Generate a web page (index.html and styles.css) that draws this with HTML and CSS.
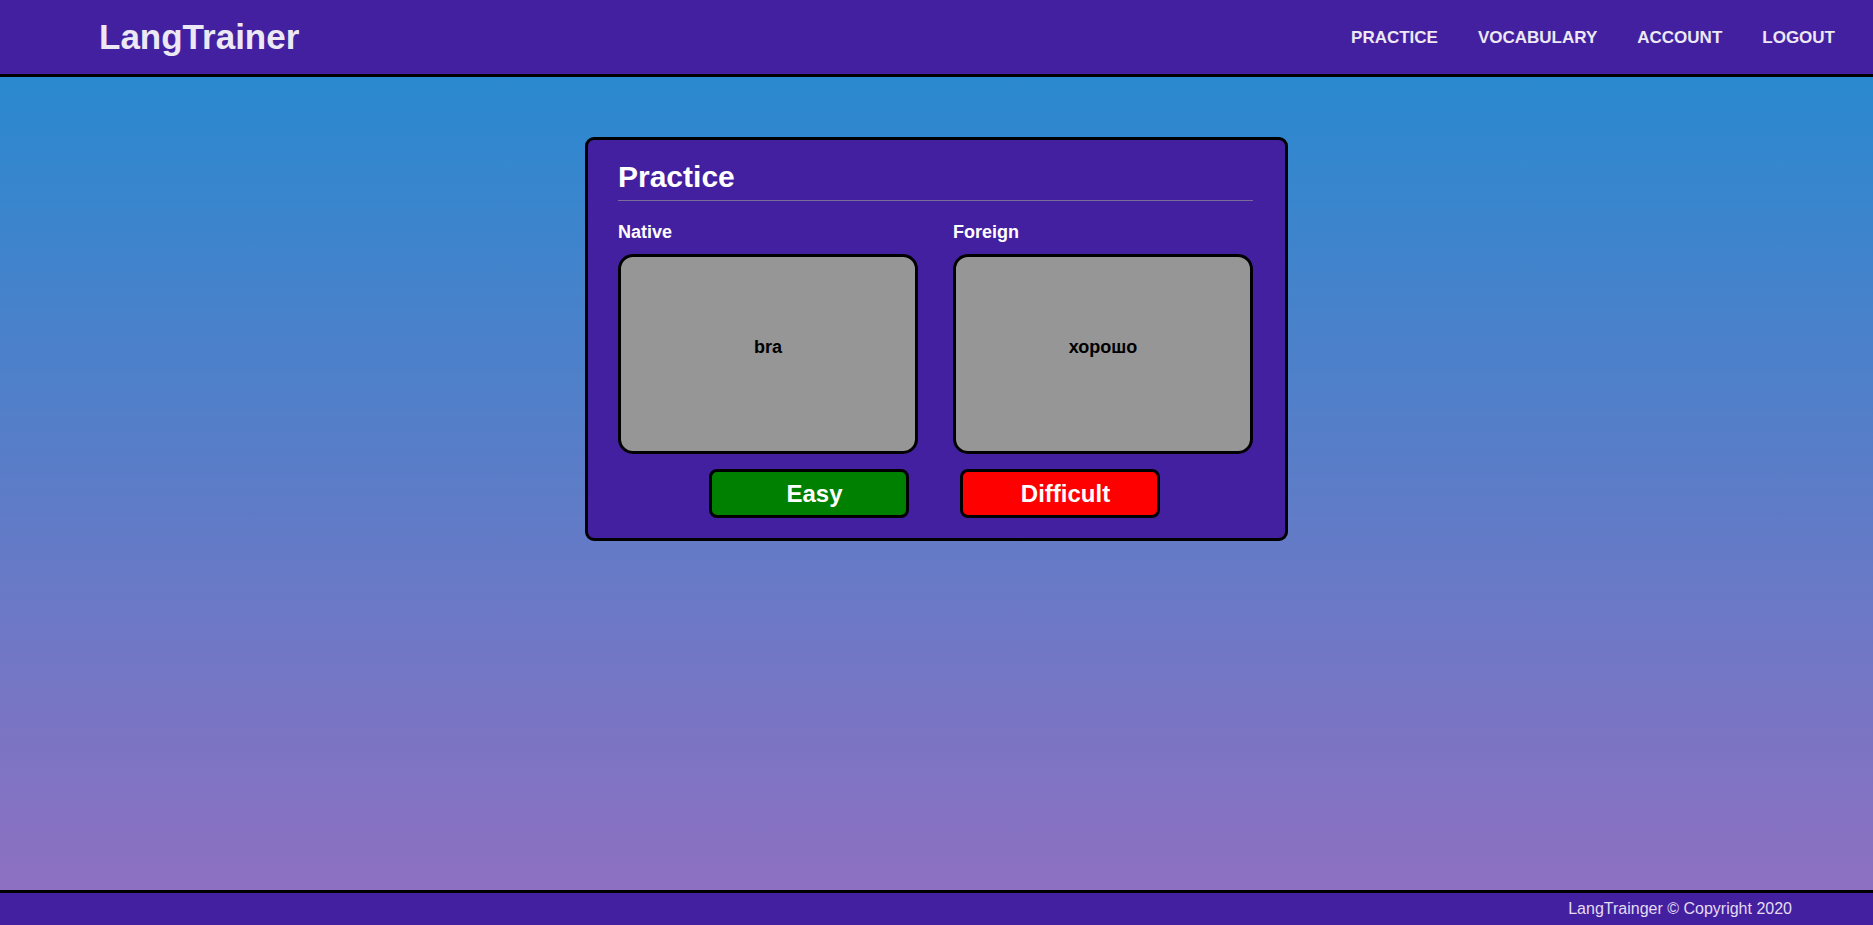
FILE: index.html
```html
<!DOCTYPE html>
<html lang="en">
<head>
<meta charset="utf-8">
<title>LangTrainer</title>
<link rel="stylesheet" href="styles.css">
</head>
<body>
<header class="topbar">
  <div class="logo">LangTrainer</div>
  <nav class="nav">
    <a class="nav-link" href="#">PRACTICE</a>
    <a class="nav-link" href="#">VOCABULARY</a>
    <a class="nav-link" href="#">ACCOUNT</a>
    <a class="nav-link" href="#">LOGOUT</a>
  </nav>
</header>
<main class="main">
  <section class="card">
    <h2 class="card-title">Practice</h2>
    <div class="columns">
      <div class="column">
        <div class="label">Native</div>
        <div class="word-box"><span class="word">bra</span></div>
      </div>
      <div class="column">
        <div class="label">Foreign</div>
        <div class="word-box"><span class="word">хорошо</span></div>
      </div>
    </div>
    <div class="actions">
      <button class="btn btn-easy">Easy</button>
      <button class="btn btn-hard">Difficult</button>
    </div>
  </section>
</main>
<footer class="footer">LangTrainger © Copyright 2020</footer>
</body>
</html>
```
FILE: styles.css
```css
html, body {
  margin: 0;
  padding: 0;
  height: 100%;
}
body {
  font-family: "Liberation Sans", Arial, sans-serif;
  display: flex;
  flex-direction: column;
  min-height: 100vh;
}
.topbar {
  box-sizing: border-box;
  background: #4320a0;
  height: 77px;
  border-bottom: 3px solid #000;
  display: flex;
  align-items: center;
  justify-content: space-between;
  padding: 2px 38px 0 99px;
  flex-shrink: 0;
}
.logo {
  color: #ece8f4;
  font-weight: bold;
  font-size: 35px;
  margin-top: -2px;
}
.nav {
  display: flex;
  align-items: center;
}
.nav-link {
  color: #ece8f4;
  text-decoration: none;
  font-weight: bold;
  font-size: 17px;
  margin-left: 40px;
}
.main {
  flex: 1;
  background: linear-gradient(to bottom, #2a89cf, #8e70c1);
  display: flex;
  flex-direction: column;
  align-items: center;
  padding-top: 60px;
}
.card {
  box-sizing: border-box;
  width: 703px;
  background: #4320a0;
  border: 3px solid #000;
  border-radius: 9px;
  padding: 20px 32px 20px 30px;
}
.card-title {
  margin: 0;
  color: #fff;
  font-size: 30px;
  font-weight: bold;
  padding-bottom: 6px;
  border-bottom: 1px solid #7a6e98;
}
.columns {
  display: grid;
  grid-template-columns: 1fr 1fr;
  column-gap: 35px;
  margin-top: 21px;
}
.label {
  color: #fff;
  font-weight: bold;
  font-size: 18px;
  margin-bottom: 11px;
}
.word-box {
  box-sizing: border-box;
  height: 200px;
  background: #969696;
  border: 3px solid #000;
  border-radius: 15px;
  padding-top: 80px;
  text-align: center;
}
.word {
  font-weight: bold;
  font-size: 18px;
  color: #000;
}
.actions {
  display: flex;
  justify-content: center;
  gap: 51px;
  margin-top: 15px;
  padding-right: 2px;
}
.btn {
  box-sizing: border-box;
  width: 200px;
  height: 49px;
  border: 3px solid #000;
  border-radius: 8px;
  color: #fff;
  font-family: "Liberation Sans", Arial, sans-serif;
  font-weight: bold;
  font-size: 24px;
  padding: 0 0 0 11px;
  cursor: pointer;
}
.btn-easy {
  background: #008000;
}
.btn-hard {
  background: #ff0000;
}
.footer {
  flex-shrink: 0;
  height: 32px;
  background: #4320a0;
  border-top: 3px solid #000;
  color: #e4dcf2;
  font-size: 16px;
  display: flex;
  align-items: center;
  justify-content: flex-end;
  padding-right: 81px;
}
```
